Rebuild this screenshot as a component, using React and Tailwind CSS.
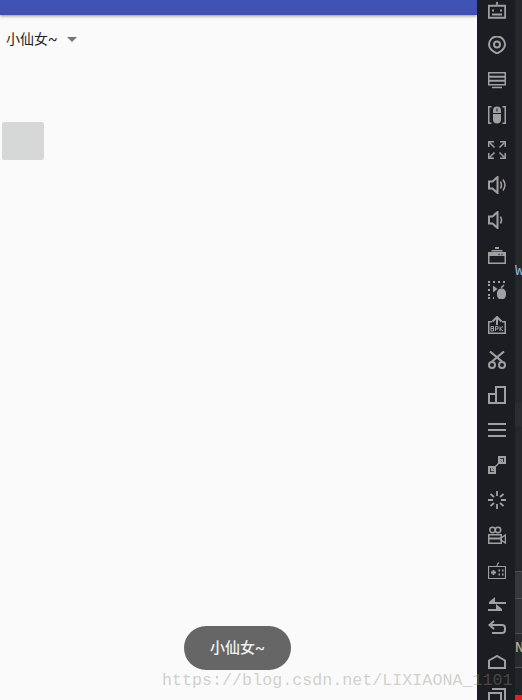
const icon = "w-[18px] h-[18px] fill-none stroke-[#a0a0a0] stroke-[1.5]";

// toolbar icons, top to bottom
function Robot() {
  return (
    <svg viewBox="0 0 18 18" className={icon}>
      <path d="M.75 4.750h16.500v12H.75z" strokeWidth="2" />
      <path d="M9 4.500V1" />
      <path d="M7.500 2.500L9 .5l1.500 2z" fill="#a0a0a0" stroke="none" />
      <path d="M4 9.500h2M12 9.500h2M4 13.500h10" strokeWidth="2" />
    </svg>
  );
}
function Pin() {
  return (
    <svg viewBox="0 0 18 18" className={icon}>
      <path d="M9 17.500C4 15 1 12.500 1 8.500a8 8 0 0 1 16 0c0 4-3 6.500-8 9z" strokeWidth="2" />
      <circle cx="9" cy="8.500" r="3" strokeWidth="2" />
    </svg>
  );
}
function Screen() {
  return (
    <svg viewBox="0 0 18 18" className={icon}>
      <path d="M.75 1.750h16.500v12H.75z" />
      <path d="M1 5.750h16M1 9.750h16" strokeWidth="2" />
      <path d="M4 16.500h10" />
    </svg>
  );
}
function Phone() {
  return (
    <svg viewBox="0 0 18 18" className={icon}>
      <path d="M3.500.75H.75v16.500H3.500M14.500.75h2.750v16.500H14.500" strokeWidth="1.500" />
      <path d="M5 4.500a4 4 0 0 1 8 0v9a4 4 0 0 1-8 0z" fill="#a0a0a0" stroke="none" />
      <path d="M5 7.500h8M9 2.500v3" stroke="#1c1d22" strokeWidth="1" />
    </svg>
  );
}
function Expand() {
  return (
    <svg viewBox="0 0 18 18" className={icon}>
      <path d="M.75 6V.75H6M12 .75h5.250V6M17.250 12v5.250H12M6 17.250H.75V12" strokeWidth="1.500" />
      <path d="M1.500 1.500l5 5M16.500 1.500l-5 5M16.500 16.500l-5-5M1.500 16.500l5-5" />
    </svg>
  );
}
function Volume({ up }) {
  return (
    <svg viewBox="0 0 18 18" className={icon}>
      <path d="M1 5.500h3.500L9.500 1v16l-5-4.500H1z" strokeWidth="2" />
      <path d="M12.500 5.500c1.300 2.300 1.300 4.700 0 7" />
      {up && <path d="M15 3.500c2.300 3.300 2.300 7.700 0 11" />}
    </svg>
  );
}
function Camera() {
  return (
    <svg viewBox="0 0 18 18" className={icon}>
      <path d="M.75 6.750h16.500v10.500H.75z" />
      <path d="M1 8.500h16" strokeWidth="3" />
      <path d="M3.500 4.750h11" strokeWidth="1.500" />
      <path d="M7 2h4" strokeWidth="2" />
      <path d="M10.500 8.500h1M13.500 8.500h1" stroke="#1c1d22" strokeWidth="1.500" />
    </svg>
  );
}
function Record() {
  return (
    <svg viewBox="0 0 18 18" className={icon}>
      <path d="M0 1h18M1 3v15M0 17h6" strokeWidth="2" strokeDasharray="2 3" />
      <path d="M5 4.500l4.500 3.500L5 11.500z" fill="#a0a0a0" stroke="none" />
      <path d="M9 12a4.500 4.500 0 0 1 9 0v2a4.500 4.500 0 0 1-9 0z" fill="#a0a0a0" stroke="none" />
      <path d="M13 7l3-3" />
    </svg>
  );
}
function Apk() {
  return (
    <svg viewBox="0 0 18 18" className={icon}>
      <path d="M4 5.750H.75v11.500h16.500V5.750H14" />
      <path d="M9 9V1M4.500 5.500L9 1l4.500 4.500" strokeWidth="2" />
      <path d="M3 10.500h2.500v4.500H3zM3 12.500h2.500M7.500 15v-4.500H10v2.500H7.500M12 10.500V15M15 10.500l-3 2.300 3 2.200" strokeWidth="1" />
    </svg>
  );
}
function Scissors() {
  return (
    <svg viewBox="0 0 18 18" className={icon}>
      <circle cx="4" cy="14" r="3" strokeWidth="2" />
      <circle cx="14" cy="14" r="3" strokeWidth="2" />
      <path d="M2 .5l12 10M16 .5L4 10.500" strokeWidth="2.200" />
    </svg>
  );
}
function Bars() {
  return (
    <svg viewBox="0 0 18 18" className={icon}>
      <path d="M1 8h7v9H1zM8 1h9v16H8z" strokeWidth="2" />
    </svg>
  );
}
function Menu() {
  return (
    <svg viewBox="0 0 18 18" className={icon}>
      <path d="M0 3h18M0 9h18M0 15h18" strokeWidth="2" />
    </svg>
  );
}
function Resize() {
  return (
    <svg viewBox="0 0 18 18" className={icon}>
      <path d="M1 11h6v6H1zM11 1h6v6h-6z" strokeWidth="2" />
      <path d="M3.500 14.500l11-11M3.500 10v4.500H8M10 3.500h4.500V8" strokeWidth="1.300" />
    </svg>
  );
}
function Spinner() {
  return (
    <svg viewBox="0 0 18 18" className={icon}>
      <path d="M9 0v5M9 13v5M0 9h5M13 9h5M2.500 3l3.500 3M15.500 3L12 6M2.500 15L6 12M15.500 15L12 12" strokeWidth="1.800" />
    </svg>
  );
}
function Video() {
  return (
    <svg viewBox="0 0 18 18" className={icon}>
      <path d="M.75 8.750h12.500v8.500H.75z" />
      <path d="M1 12.500h12" strokeWidth="2" />
      <circle cx="4.500" cy="4" r="2.700" />
      <circle cx="10" cy="4" r="2.700" />
      <path d="M13 12l4.500-3v8L13 14z" />
    </svg>
  );
}
function Gamepad() {
  return (
    <svg viewBox="0 0 18 18" className={icon}>
      <path d="M.5 5.500h17v12H.5zM9 5.500C9 3.500 10 2 11 1.500" strokeWidth="1.200" />
      <path d="M3 11.500h5M5.500 9v5" strokeWidth="1.800" />
      <path d="M10.500 9.500H12M14 9.500h1.500M10.500 13.500H12M14 13.500h1.500" strokeWidth="1.800" />
    </svg>
  );
}
function Swap() {
  return (
    <svg viewBox="0 0 18 14" className="w-[18px] h-[14px] fill-none stroke-[#a0a0a0] stroke-2">
      <path d="M1 6h17" />
      <path d="M7 0L1 5h6z" fill="#a0a0a0" stroke="none" />
      <path d="M0 13h14" />
      <path d="M8 7l6 5H8z" fill="#a0a0a0" stroke="none" />
    </svg>
  );
}
function Back() {
  return (
    <svg viewBox="0 0 18 14" className="w-[18px] h-[14px] fill-none stroke-[#a0a0a0] stroke-2">
      <path d="M6 1L1.500 5 6 9" />
      <path d="M2 5h12a3 3 0 0 1 3 3v2a3 3 0 0 1-3 3H4" />
    </svg>
  );
}
function Home() {
  return (
    <svg viewBox="0 0 18 14" className="w-[18px] h-[14px] fill-none stroke-[#a0a0a0] stroke-2">
      <path d="M1 5.500L9 1l8 4.500V13H1z" />
    </svg>
  );
}
function Recents() {
  return (
    <svg viewBox="0 0 18 18" className={icon}>
      <path d="M1 5h12v12H1z" strokeWidth="2" />
      <path d="M4 1h13v12" strokeWidth="2" />
    </svg>
  );
}

const tools = [Robot, Pin, Screen, Phone, Expand, () => <Volume up />, () => <Volume />, Camera, Record, Apk, Scissors, Bars, Menu, Resize, Spinner, Video, Gamepad];

export default function App() {
  return (
    <div className="relative flex w-[522px] h-[700px] overflow-hidden bg-[#fafafa] font-['Roboto','Noto_Sans_CJK_SC',sans-serif]">
      {/* app under test */}
      <div className="w-[477px] flex flex-col shrink-0">
        <div className="h-[15px] bg-[#3f51b5] shadow-[0_1px_3px_rgba(0,0,0,0.45)]"></div>
        <div className="mt-[15px] flex items-center h-[18px] pl-[6px]">
          <span className="text-[14px] leading-[18px] text-[#212121]">小仙女~</span>
          <span className="ml-[9px] w-0 h-0 border-x-[5px] border-x-transparent border-t-[5px] border-t-[#757575]"></span>
        </div>
        <div className="mt-[74px] ml-[2px] w-[42px] h-[38px] rounded-[2px] bg-[#d6d7d7]"></div>
      </div>

      {/* emulator toolbar */}
      <div className="w-[38px] h-[720px] bg-[#1c1d22] flex flex-col items-center shrink-0 mt-[-8px] pl-[2px]">
        {tools.map((Tool, i) => (
          <div key={i} className="h-[35px] shrink-0 flex items-center justify-center">
            <Tool />
          </div>
        ))}
        <div className="h-[34px] shrink-0 flex items-center justify-center"><Swap /></div>
        <div className="h-[12px] shrink-0 flex items-center justify-center"><Back /></div>
        <div className="h-[58px] shrink-0 flex items-center justify-center"><Home /></div>
        <div className="h-[12px] shrink-0 flex items-center justify-center"><Recents /></div>
      </div>

      {/* code editor peeking in */}
      <div className="flex-1 flex flex-col bg-[#26272b] overflow-hidden">
        <div className="h-[262px] shrink-0"></div>
        <div className="h-[20px] shrink-0 text-[15px] leading-[20px] text-[#8fb0d0] font-['Liberation_Mono',monospace]">W</div>
        <div className="h-[120px] shrink-0"></div>
        <div className="h-[25px] shrink-0 bg-[#2b2c30]"></div>
        <div className="h-[144px] shrink-0"></div>
        <div className="h-[27px] shrink-0 bg-[#35373a] border-t border-[#4c4e50]"></div>
        <div className="h-[35px] shrink-0 bg-[#303235] border-t border-[#4c4e50]"></div>
        <div className="h-[34px] shrink-0 bg-[#292a2e] border-t border-[#4c4e50] text-[15px] leading-[30px] text-[#c8b48a] font-['Liberation_Mono',monospace]">N</div>
        <div className="h-[33px] shrink-0 bg-[#232428] border-t border-[#4c4e50] pt-[27px]">
          <div className="w-[7px] h-[5px] bg-[#e02020]"></div>
        </div>
      </div>

      {/* toast */}
      <div className="absolute left-[184px] top-[626px] w-[107px] h-[44px] rounded-full bg-[#666666] flex items-center justify-center text-[15px] font-medium text-[#f0f0f0]">
        小仙女~
      </div>

      {/* watermark */}
      <div className="absolute left-[162px] top-[671px] text-[16.7px] leading-[20px] text-[#8f8f80]/40 font-['Liberation_Mono',monospace] whitespace-nowrap">
        https://blog.csdn.net/LIXIAONA_1101
      </div>
    </div>
  );
}
